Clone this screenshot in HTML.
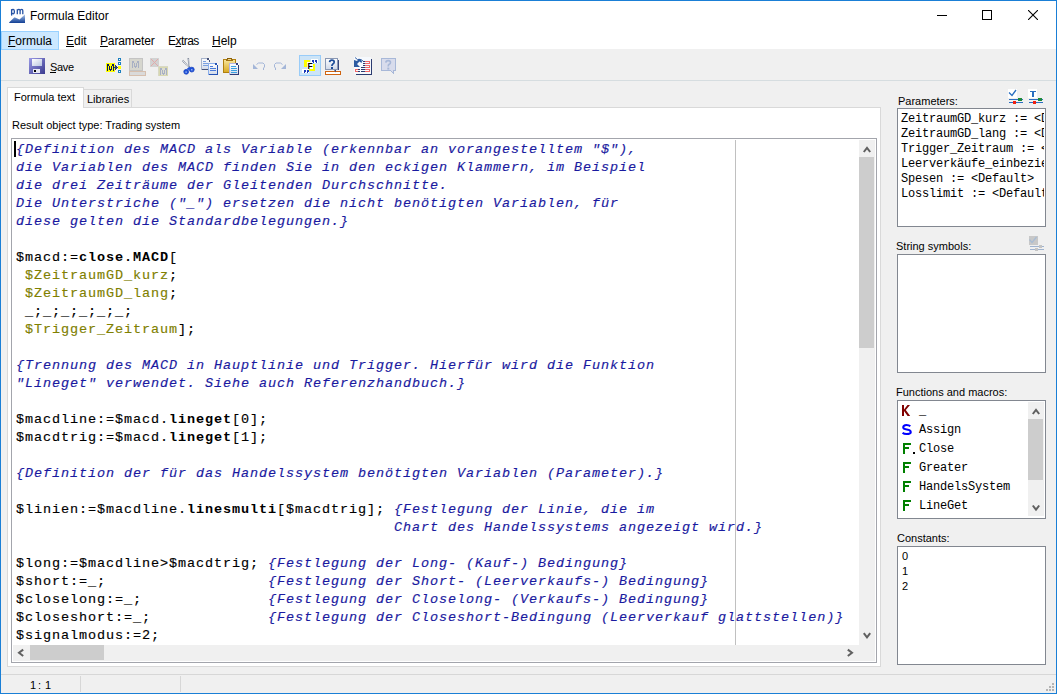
<!DOCTYPE html>
<html><head><meta charset="utf-8">
<style>
html,body{margin:0;padding:0;}
body{width:1057px;height:694px;position:relative;overflow:hidden;background:#f0f0f0;font-family:"Liberation Sans",sans-serif;font-size:11px;color:#000;}
.a{position:absolute;}
.t{position:absolute;white-space:pre;line-height:1;}
#win{left:0;top:0;width:1055px;height:692px;border:1px solid #1a7fd6;}
#title{left:1px;top:1px;width:1055px;height:30px;background:#fff;}
#menu{left:1px;top:31px;width:1055px;height:18px;background:#fff;}
#tbline{left:1px;top:80px;width:1055px;height:1px;background:#d6dde0;}
u{text-decoration:underline;text-decoration-thickness:1px;text-underline-offset:1px;}
.panel{background:#fff;border:1px solid #d9d9d9;}
.lb{background:#fff;border:1px solid #828790;}
.code{-webkit-text-stroke:0.15px currentColor;font-family:"Liberation Mono",monospace;font-size:13.5px;letter-spacing:0.9px;line-height:18px;white-space:pre;}
.c{color:#1a1aa0;font-style:italic;}
.b{font-weight:bold;-webkit-text-stroke:0;}
.p{color:#808000;}
.mono12{font-family:"Liberation Mono",monospace;font-size:12px;letter-spacing:-0.2px;white-space:pre;}
</style></head><body>
<div class="a" id="win"></div>
<div class="a" id="title"></div>
<div class="a" id="menu"></div>
<div class="a" id="tbline"></div>

<!-- title icon -->
<svg class="a" style="left:6px;top:6px" width="22" height="20" viewBox="6 6 22 20">
<defs><linearGradient id="gw" x1="0" y1="0" x2="0" y2="1"><stop offset="0" stop-color="#c4d4ec"/><stop offset="0.5" stop-color="#5a80c0"/><stop offset="1" stop-color="#123f94"/></linearGradient></defs>
<g fill="none" stroke="#2552a4" stroke-width="1.3">
<path d="M11.6 9.2 V15.6"/>
<path d="M11.6 10.3 Q12.2 9.3 13.2 9.4 Q14.4 9.6 14.4 11.6 Q14.4 13.8 13.1 13.8 Q12.1 13.8 11.6 12.8"/>
<path d="M17.3 9.2 V14.2 M17.3 10.4 Q18 9.4 19 9.4 Q20 9.4 20.1 10.6 V14.2 M20.1 10.6 Q20.6 9.4 21.7 9.4 Q22.8 9.4 22.8 10.8 V14.2"/>
</g>
<path d="M9 22.6 L14.5 17.2 L19.5 19.6 L25 14.3 L25 23 L9.5 23 Z" fill="url(#gw)"/>
</svg>
<div class="t" style="left:30px;top:10px;font-size:12px;">Formula Editor</div>
<!-- window controls -->
<div class="a" style="left:937px;top:15px;width:10px;height:1px;background:#000"></div>
<div class="a" style="left:982px;top:10px;width:8px;height:8px;border:1px solid #000"></div>
<svg class="a" style="left:1028px;top:10px" width="10" height="10" viewBox="0 0 10 10"><path d="M0 0L10 10M10 0L0 10" stroke="#000" stroke-width="1.1"/></svg>

<!-- menu -->
<div class="a" style="left:1px;top:31px;width:56px;height:17px;background:#cce8ff;border:1px solid #99d1ff"></div>
<div class="t" style="left:8px;top:35px;font-size:12px;"><u>F</u>ormula</div>
<div class="t" style="left:66px;top:35px;font-size:12px;"><u>E</u>dit</div>
<div class="t" style="left:100px;top:35px;font-size:12px;letter-spacing:-0.15px;"><u>P</u>arameter</div>
<div class="t" style="left:168px;top:35px;font-size:12px;letter-spacing:-0.55px;">E<u>x</u>tras</div>
<div class="t" style="left:212px;top:35px;font-size:12px;"><u>H</u>elp</div>

<!-- toolbar -->
<svg class="a" style="left:0;top:0" width="420" height="80" viewBox="0 0 420 80">
<defs>
<linearGradient id="flop" x1="0" y1="0" x2="1" y2="1"><stop offset="0" stop-color="#9a9ae6"/><stop offset="1" stop-color="#3a3a8e"/></linearGradient>
<linearGradient id="flab" x1="0" y1="0" x2="1" y2="1"><stop offset="0" stop-color="#ffffff"/><stop offset="1" stop-color="#b8c4e0"/></linearGradient>
<linearGradient id="gold" x1="0" y1="0" x2="0" y2="1"><stop offset="0" stop-color="#f8e8a0"/><stop offset="1" stop-color="#d8a820"/></linearGradient>
<linearGradient id="docg" x1="0" y1="0" x2="0" y2="1"><stop offset="0" stop-color="#ffffff"/><stop offset="1" stop-color="#d0d8e8"/></linearGradient>
</defs>
<!-- floppy -->
<g shape-rendering="crispEdges">
<rect x="29" y="58" width="16" height="16" fill="url(#flop)"/>
<rect x="29" y="58" width="16" height="16" fill="none" stroke="#5a5ab0" stroke-width="1" transform="translate(0.5 0.5) scale(1)" style="display:none"/>
<rect x="32" y="59" width="10" height="7" fill="url(#flab)"/>
<rect x="33" y="69" width="7" height="4" fill="#e8e8f4"/>
<rect x="34" y="70" width="2" height="2" fill="#000"/>
</g>
<text x="50" y="71" font-family="Liberation Sans" font-size="11" letter-spacing="-0.3">Save</text>
<rect x="50" y="72" width="6" height="1" fill="#000"/>
<!-- M+ icon -->
<g shape-rendering="crispEdges">
<rect x="106" y="63" width="9" height="9" fill="#ffff00"/>
<g fill="#0a1a5a"><rect x="107" y="64" width="1" height="7"/><rect x="108" y="64" width="1" height="2"/><rect x="109" y="66" width="1" height="4"/><rect x="110" y="69" width="1" height="2"/><rect x="111" y="66" width="1" height="4"/><rect x="112" y="64" width="1" height="2"/><rect x="113" y="64" width="1" height="7"/></g>
<g fill="#283c78"><rect x="114" y="67" width="1" height="1"/><rect x="115" y="65" width="1" height="5"/><rect x="116" y="66" width="1" height="3"/><rect x="117" y="67" width="1" height="1"/></g>
<rect x="118" y="58" width="3" height="3" fill="#1b7fc0"/><rect x="119" y="59" width="1" height="1" fill="#fff"/>
<rect x="118" y="62" width="3" height="3" fill="#1b7fc0"/><rect x="119" y="63" width="1" height="1" fill="#fff"/>
<rect x="118" y="66" width="3" height="3" fill="#ffff00"/>
<rect x="118" y="70" width="3" height="3" fill="#1b7fc0"/><rect x="119" y="71" width="1" height="1" fill="#fff"/>
</g>
<!-- gray M bubble -->
<g shape-rendering="crispEdges">
<rect x="129" y="58" width="13" height="12" fill="#d6d6ce" stroke="#c4c4c4"/>
<g fill="#a8b0c4"><rect x="132" y="61" width="1" height="7"/><rect x="133" y="61" width="1" height="2"/><rect x="134" y="63" width="1" height="4"/><rect x="135" y="66" width="1" height="2"/><rect x="136" y="63" width="1" height="4"/><rect x="137" y="61" width="1" height="2"/><rect x="138" y="61" width="1" height="7"/></g>
<rect x="129" y="71" width="16" height="4" fill="#dadada" stroke="#d6bfae"/>
</g>
<!-- X / M -->
<g shape-rendering="crispEdges">
<rect x="150" y="58" width="9" height="9" fill="#d2d2d2"/>
<path d="M151 59l7 7M158 59l-7 7" stroke="#e2aaaa" stroke-width="1" shape-rendering="auto"/>
<rect x="158" y="66" width="10" height="10" fill="#d8d8c4"/>
<rect x="159" y="67" width="8" height="8" fill="#dcdcd0" stroke="#d8d8b0"/>
<g fill="#a8b0c4"><rect x="160" y="68" width="1" height="7"/><rect x="161" y="68" width="1" height="2"/><rect x="162" y="70" width="1" height="4"/><rect x="163" y="73" width="1" height="2"/><rect x="164" y="70" width="1" height="4"/><rect x="165" y="68" width="1" height="2"/><rect x="166" y="68" width="1" height="7"/></g>
</g>
<!-- scissors -->
<path d="M182.5 60.5L189.5 67.5" stroke="#7c8494" stroke-width="1.8" stroke-dasharray="1 0.6"/>
<path d="M182.5 60.5L189.5 67.5" stroke="#e8ecf4" stroke-width="0.6"/>
<path d="M188.2 58L189.4 67" stroke="#8a92a2" stroke-width="1.6"/>
<path d="M188.8 59L189.6 66" stroke="#eef2f8" stroke-width="0.6"/>
<circle cx="186.2" cy="71.8" r="2.4" fill="#1f52d8" stroke="#1440c0" stroke-width="0.8"/>
<circle cx="191.8" cy="69.6" r="2.4" fill="#1f52d8" stroke="#1440c0" stroke-width="0.8"/>
<rect x="185.5" y="71.5" width="1.2" height="1.2" fill="#cfe0ff"/>
<rect x="191.2" y="69.2" width="1.2" height="1.2" fill="#cfe0ff"/>
<path d="M187.5 69.5L190 67.5" stroke="#1f52d8" stroke-width="2"/>
<!-- copy -->
<g shape-rendering="crispEdges">
<rect x="201" y="58" width="9" height="12" fill="url(#docg)"/>
<rect x="201" y="58" width="1" height="12" fill="#a8b4cc"/><rect x="201" y="58" width="7" height="1" fill="#a8b4cc"/>
<rect x="202" y="69" width="7" height="1" fill="#48547a"/>
<rect x="207" y="58" width="2" height="2" fill="#48547a"/><rect x="209" y="60" width="1" height="2" fill="#48547a"/>
<rect x="203" y="61" width="3" height="1" fill="#7aa0e0"/><rect x="203" y="63" width="5" height="1" fill="#7aa0e0"/><rect x="203" y="65" width="5" height="1" fill="#7aa0e0"/>
<rect x="208" y="63" width="10" height="12" fill="url(#docg)"/>
<rect x="208" y="63" width="1" height="12" fill="#8cb0ec"/><rect x="208" y="63" width="8" height="1" fill="#8cb0ec"/>
<rect x="209" y="74" width="9" height="1" fill="#2452b4"/><rect x="217" y="65" width="1" height="10" fill="#2452b4"/>
<rect x="215" y="63" width="2" height="2" fill="#2452b4"/>
<rect x="210" y="66" width="3" height="1" fill="#4a7ad8"/><rect x="210" y="68" width="6" height="1" fill="#4a7ad8"/><rect x="210" y="70" width="6" height="1" fill="#4a7ad8"/>
</g>
<!-- paste -->
<g shape-rendering="crispEdges">
<rect x="223.5" y="59.5" width="12" height="13" fill="url(#gold)" stroke="#b08010"/>
<rect x="227" y="58" width="5" height="1" fill="#8a6008"/><rect x="226" y="59" width="7" height="2" fill="#a07010"/><rect x="228" y="59" width="3" height="1" fill="#f0d890"/>
<rect x="229" y="63" width="10" height="12" fill="url(#docg)"/>
<rect x="229" y="63" width="1" height="12" fill="#b4b4e4"/><rect x="229" y="63" width="8" height="1" fill="#b4b4e4"/>
<rect x="230" y="74" width="9" height="1" fill="#303c78"/><rect x="238" y="65" width="1" height="10" fill="#303c78"/>
<rect x="236" y="63" width="2" height="2" fill="#303c78"/>
<rect x="231" y="66" width="5" height="1" fill="#3aa0e0"/><rect x="231" y="68" width="6" height="1" fill="#3aa0e0"/><rect x="231" y="70" width="6" height="1" fill="#3aa0e0"/><rect x="231" y="72" width="6" height="1" fill="#3aa0e0"/>
</g>
<!-- undo redo -->
<g fill="none" stroke="#a4b6d8" stroke-width="1">
<path d="M256.5 64.5 L258.5 63 L263 63 L264.5 64.5 L264.5 67 L263.5 68 L263.5 70"/>
<path d="M282.5 64.5 L280.5 63 L276 63 L274.5 64.5 L274.5 67 L275.5 68 L275.5 70"/>
</g>
<path d="M253 64 L253 69 L258 69 Z" fill="#a4b6d8"/>
<path d="M286 64 L286 69 L281 69 Z" fill="#a4b6d8"/>
<!-- pressed F button -->
<rect x="299.5" y="55.5" width="21" height="20" fill="#cce4f7" stroke="#99ccf8" shape-rendering="crispEdges"/>
<g shape-rendering="crispEdges">
<rect x="304" y="60" width="6" height="7" fill="#ffff00"/>
<rect x="309" y="64" width="6" height="7" fill="#ffff00"/>
<rect x="307" y="62" width="6" height="7" fill="#ffffff"/>
<rect x="311" y="59" width="7" height="4" fill="#ffffff"/>
<rect x="302" y="69" width="7" height="4" fill="#ffffff"/>
</g>
<text x="307.5" y="69.3" font-family="Liberation Sans" font-weight="bold" font-size="8.5">F</text>
<g fill="#1a3ab8" shape-rendering="crispEdges">
<rect x="312" y="60" width="2" height="2"/><rect x="313" y="62" width="1" height="1"/>
<rect x="315" y="60" width="2" height="2"/><rect x="316" y="62" width="1" height="1"/>
<rect x="304" y="70" width="2" height="2"/><rect x="304" y="72" width="1" height="1"/>
<rect x="307" y="70" width="2" height="2"/><rect x="307" y="72" width="1" height="1"/>
</g>
<!-- help bubble -->
<g shape-rendering="crispEdges">
<rect x="325.5" y="58.5" width="12" height="11" fill="url(#docg)" stroke="#8a98b4"/>
<rect x="338" y="60" width="1" height="10" fill="#3a4a80"/>
<rect x="325.5" y="71.5" width="15" height="3" fill="#fff" stroke="#d06410"/>
</g>
<path d="M329.6 62.2 Q329.8 60.2 331.9 60.2 Q334.2 60.2 334.2 62 Q334.2 63.2 332.9 63.9 Q331.9 64.5 331.9 66" fill="none" stroke="#1c4c98" stroke-width="1.7"/>
<rect x="331" y="67" width="2" height="2" fill="#1c4c98"/>
<path d="M334 70 L336 72.5 L336 70 Z" fill="#3a4a80"/>
<!-- list icon -->
<g shape-rendering="crispEdges">
<rect x="354" y="57" width="17" height="17" fill="#f6f9fd"/>
<rect x="371" y="59" width="1" height="16" fill="#2c3c70"/>
<rect x="356" y="74" width="16" height="1" fill="#2c3c70"/>
<g fill="#f06868">
<rect x="365" y="61" width="5" height="1"/><rect x="365" y="63" width="5" height="1"/><rect x="369" y="61" width="1" height="3"/>
<rect x="365" y="65" width="5" height="1"/><rect x="365" y="67" width="5" height="1"/><rect x="369" y="65" width="1" height="3"/>
<rect x="355" y="69" width="3" height="1"/><rect x="355" y="71" width="3" height="1"/><rect x="355" y="69" width="1" height="3"/>
<rect x="365" y="69" width="5" height="1"/><rect x="365" y="71" width="5" height="1"/><rect x="369" y="69" width="1" height="3"/>
</g>
<g fill="#2c3c70">
<rect x="363" y="61" width="2" height="1"/><rect x="363" y="63" width="2" height="1"/>
<rect x="363" y="65" width="2" height="1"/><rect x="361" y="67" width="4" height="1"/>
<rect x="358" y="69" width="2" height="1"/><rect x="358" y="71" width="2" height="1"/>
<rect x="361" y="69" width="4" height="1"/><rect x="361" y="71" width="4" height="1"/>
</g>
</g>
<path d="M354 60 L354 67 L360 67 L357 64 L359.5 61.5 L361.5 63 L362 61 L359 58.5 L357 61 Z" fill="#2c5aa0"/>
<path d="M355 57.5 L357.5 59.5 L361 59.5 L363 61" fill="none" stroke="#2c5aa0" stroke-width="0.9"/>
<!-- gray ? -->
<path d="M381.5 58.5 h14 v12 h-2 v3 l-3 -3 h-9 z" fill="#d8dcec" stroke="#a8b8d8" shape-rendering="crispEdges"/>
<path d="M385.8 62.6 Q386 60.6 388.2 60.6 Q390.5 60.6 390.5 62.4 Q390.5 63.6 389.2 64.3 Q388.2 64.9 388.2 66.4" fill="none" stroke="#a8b8d8" stroke-width="1.6"/>
<rect x="387.3" y="67.6" width="2" height="2" fill="#a8b8d8"/>
</svg>

<!-- tab panel -->
<div class="a panel" style="left:7px;top:107px;width:872px;height:558px;"></div>
<div class="a" style="left:83px;top:89px;width:47px;height:17px;background:#f0f0f0;border:1px solid #d9d9d9;border-bottom:none"></div>
<div class="a" style="left:7px;top:87px;width:75px;height:20px;background:#fff;border:1px solid #d9d9d9;border-bottom:none"></div>
<div class="t" style="left:14px;top:92px;">Formula text</div>
<div class="t" style="left:87px;top:94px;">Libraries</div>
<div class="t" style="left:12px;top:120px;">Result object type: Trading system</div>

<!-- editor -->
<div class="a lb" style="left:11px;top:138px;width:864px;height:523px;border-color:#a3a5ac"></div>
<div class="a" style="left:735px;top:140px;width:1px;height:505px;background:#c0c0c0"></div>
<div class="a code" id="code" style="left:16px;top:141px;"><span class="c">{Definition des MACD als Variable (erkennbar an vorangestelltem "$"),
die Variablen des MACD finden Sie in den eckigen Klammern, im Beispiel
die drei Zeiträume der Gleitenden Durchschnitte.
Die Unterstriche ("_") ersetzen die nicht benötigten Variablen, für
diese gelten die Standardbelegungen.}</span>

$macd:=<span class="b">close.MACD</span>[
 <span class="p">$ZeitraumGD_kurz</span>;
 <span class="p">$ZeitraumGD_lang</span>;
 _;_;_;_;_;_;
 <span class="p">$Trigger_Zeitraum</span>];

<span class="c">{Trennung des MACD in Hauptlinie und Trigger. Hierfür wird die Funktion
"Lineget" verwendet. Siehe auch Referenzhandbuch.}</span>

$macdline:=$macd.<span class="b">lineget</span>[0];
$macdtrig:=$macd.<span class="b">lineget</span>[1];

<span class="c">{Definition der für das Handelssystem benötigten Variablen (Parameter).}</span>

$linien:=$macdline.<span class="b">linesmulti</span>[$macdtrig]; <span class="c">{Festlegung der Linie, die im
                                          Chart des Handelssystems angezeigt wird.}</span>

$long:=$macdline&gt;$macdtrig; <span class="c">{Festlegung der Long- (Kauf-) Bedingung}</span>
$short:=_;                  <span class="c">{Festlegung der Short- (Leerverkaufs-) Bedingung}</span>
$closelong:=_;              <span class="c">{Festlegung der Closelong- (Verkaufs-) Bedingung}</span>
$closeshort:=_;             <span class="c">{Festlegung der Closeshort-Bedingung (Leerverkauf glattstellen)}</span>
$signalmodus:=2;</div>
<div class="a" style="left:859px;top:140px;width:16px;height:521px;background:#f0f0f0"></div>
<div class="a" style="left:13px;top:645px;width:862px;height:16px;background:#f0f0f0"></div>
<div class="a" style="left:859px;top:157px;width:15px;height:191px;background:#cdcdcd"></div>
<div class="a" style="left:30px;top:645px;width:74px;height:15px;background:#cdcdcd"></div>

<!-- editor scroll arrows -->
<svg class="a" style="left:0;top:0" width="880" height="666" viewBox="0 0 880 666">
<path d="M863.8 152 L867 147.8 L870.2 152" fill="none" stroke="#606060" stroke-width="2"/>
<path d="M863.8 633.2 L867 637.4 L870.2 633.2" fill="none" stroke="#606060" stroke-width="2"/>
<path d="M23.2 649.6 L19 652.8 L23.2 656" fill="none" stroke="#606060" stroke-width="2"/>
<path d="M847.8 649.6 L852 652.8 L847.8 656" fill="none" stroke="#606060" stroke-width="2"/>
</svg>
<div class="a" style="left:14px;top:141px;width:2px;height:16px;background:#000"></div>
<!-- grip -->
<svg class="a" style="left:1040px;top:678px" width="16" height="15" viewBox="1040 678 16 15" shape-rendering="crispEdges">
<rect x="1052" y="683" width="2" height="2" fill="#b4b4b4"/>
<rect x="1049" y="686" width="2" height="2" fill="#b4b4b4"/><rect x="1052" y="686" width="2" height="2" fill="#b4b4b4"/>
<rect x="1046" y="689" width="2" height="2" fill="#b4b4b4"/><rect x="1049" y="689" width="2" height="2" fill="#b4b4b4"/><rect x="1052" y="689" width="2" height="2" fill="#b4b4b4"/>
</svg>
<!-- right panel -->
<div class="t" style="left:898px;top:96px;">Parameters:</div>
<div class="a lb" style="left:897px;top:108px;width:147px;height:117px;"></div>
<div class="a" style="left:899px;top:110px;width:145px;height:114px;overflow:hidden;">
<div class="a mono12" style="left:2px;top:2px;line-height:15px;">ZeitraumGD_kurz := &lt;Default&gt;
ZeitraumGD_lang := &lt;Default&gt;
Trigger_Zeitraum := &lt;Default&gt;
Leerverkäufe_einbeziehen := &lt;Default&gt;
Spesen := &lt;Default&gt;
Losslimit := &lt;Default&gt;</div>
</div>
<svg class="a" style="left:1000px;top:84px" width="50" height="24" viewBox="1000 84 50 24">
<g shape-rendering="crispEdges">
<rect x="1008" y="89" width="9" height="9" fill="#fff"/>
<rect x="1028" y="89" width="9" height="9" fill="#fff"/>
<rect x="1009" y="99" width="14" height="1" fill="#2a6ec0"/>
<rect x="1009" y="102" width="14" height="1" fill="#2a6ec0"/>
<rect x="1018" y="98" width="4" height="3" fill="#1e8a3a"/>
<rect x="1013" y="101" width="3" height="3" fill="#f02010"/>
<rect x="1029" y="99" width="14" height="1" fill="#2a6ec0"/>
<rect x="1029" y="102" width="14" height="1" fill="#2a6ec0"/>
<rect x="1038" y="98" width="4" height="3" fill="#1e8a3a"/>
<rect x="1033" y="101" width="3" height="3" fill="#f02010"/>
<rect x="1030" y="91" width="6" height="1" fill="#2a6ec0"/>
<rect x="1032" y="91" width="2" height="6" fill="#2a6ec0"/>
</g>
<path d="M1009 92.5 L1012 95.5 L1016 90" fill="none" stroke="#2a6ec0" stroke-width="1.3"/>
</svg>
<div class="t" style="left:896px;top:241px;">String symbols:</div>
<div class="a lb" style="left:897px;top:254px;width:147px;height:117px;"></div>
<svg class="a" style="left:1025px;top:232px" width="24" height="22" viewBox="1025 232 24 22">
<g shape-rendering="crispEdges">
<rect x="1029" y="236" width="9" height="9" fill="#c8c8c8"/>
<rect x="1030" y="246" width="14" height="1" fill="#a0b4d0"/>
<rect x="1030" y="249" width="14" height="1" fill="#a0b4d0"/>
<rect x="1039" y="245" width="3" height="3" fill="#c4c4c4"/>
<rect x="1035" y="248" width="3" height="3" fill="#c4c4c4"/>
</g>
<path d="M1029.5 239.5 L1032 242.5 L1036.5 237" fill="none" stroke="#a8bcd4" stroke-width="1.2"/>
</svg>
<div class="t" style="left:896px;top:387px;">Functions and macros:</div>
<div class="a lb" style="left:897px;top:400px;width:147px;height:117px;"></div>
<div class="a" style="left:1028px;top:402px;width:16px;height:114px;background:#f0f0f0"></div>
<div class="a" style="left:1028px;top:419px;width:15px;height:61px;background:#cdcdcd"></div>
<svg class="a" style="left:1028px;top:402px" width="16" height="114" viewBox="0 0 16 114">
<path d="M4.8 12 L8 7.8 L11.2 12" fill="none" stroke="#606060" stroke-width="2"/>
<path d="M4.8 103.5 L8 107.7 L11.2 103.5" fill="none" stroke="#606060" stroke-width="2"/>
</svg>
<div class="a" style="left:899px;top:402px;width:129px;height:114px;overflow:hidden;">
<svg class="a" style="left:0;top:0" width="129" height="114" viewBox="899 402 129 114">
<path d="M902 405h2v4.5l3.5-4.5h2.5l-4.2 5 4.4 6h-2.6l-3.6-5-0 5h-2z" fill="#800000"/>
<path d="M910.3 426.3 Q909 425 906.5 425 Q903.2 425 903.2 427.6 Q903.2 429.2 906.8 429.6 Q910.8 430.1 910.8 432.2 Q910.8 434 906.5 434 Q904 434 902.6 432.7" fill="none" stroke="#0000ff" stroke-width="2"/>
<g shape-rendering="crispEdges" fill="#008000">
<rect x="903" y="443" width="2" height="11"/><rect x="903" y="443" width="8" height="2"/><rect x="903" y="447" width="6" height="2"/>
<rect x="903" y="462" width="2" height="11"/><rect x="903" y="462" width="8" height="2"/><rect x="903" y="466" width="6" height="2"/>
<rect x="903" y="481" width="2" height="11"/><rect x="903" y="481" width="8" height="2"/><rect x="903" y="485" width="6" height="2"/>
<rect x="903" y="500" width="2" height="11"/><rect x="903" y="500" width="8" height="2"/><rect x="903" y="504" width="6" height="2"/>
</g>
<rect x="913" y="452" width="2" height="2" fill="#000" shape-rendering="crispEdges"/>
</svg>
<div class="a mono12" style="left:20px;top:0px;line-height:19px;">_
Assign
Close
Greater
HandelsSystem
LineGet</div>
</div>
<div class="t" style="left:897px;top:533px;">Constants:</div>
<div class="a lb" style="left:897px;top:546px;width:147px;height:117px;"></div>
<div class="a" style="left:902px;top:549px;line-height:15px;white-space:pre;font-size:11px;">0
1
2</div>

<!-- status bar -->
<div class="a" style="left:1px;top:674px;width:1055px;height:1px;background:#d7d7d7"></div>
<div class="a" style="left:80px;top:676px;width:1px;height:16px;background:#d7d7d7"></div>
<div class="a" style="left:180px;top:676px;width:1px;height:16px;background:#d7d7d7"></div>
<div class="t" style="left:30px;top:680px;">1</div><div class="t" style="left:38px;top:680px;">:</div><div class="t" style="left:45px;top:680px;">1</div>
</body></html>
